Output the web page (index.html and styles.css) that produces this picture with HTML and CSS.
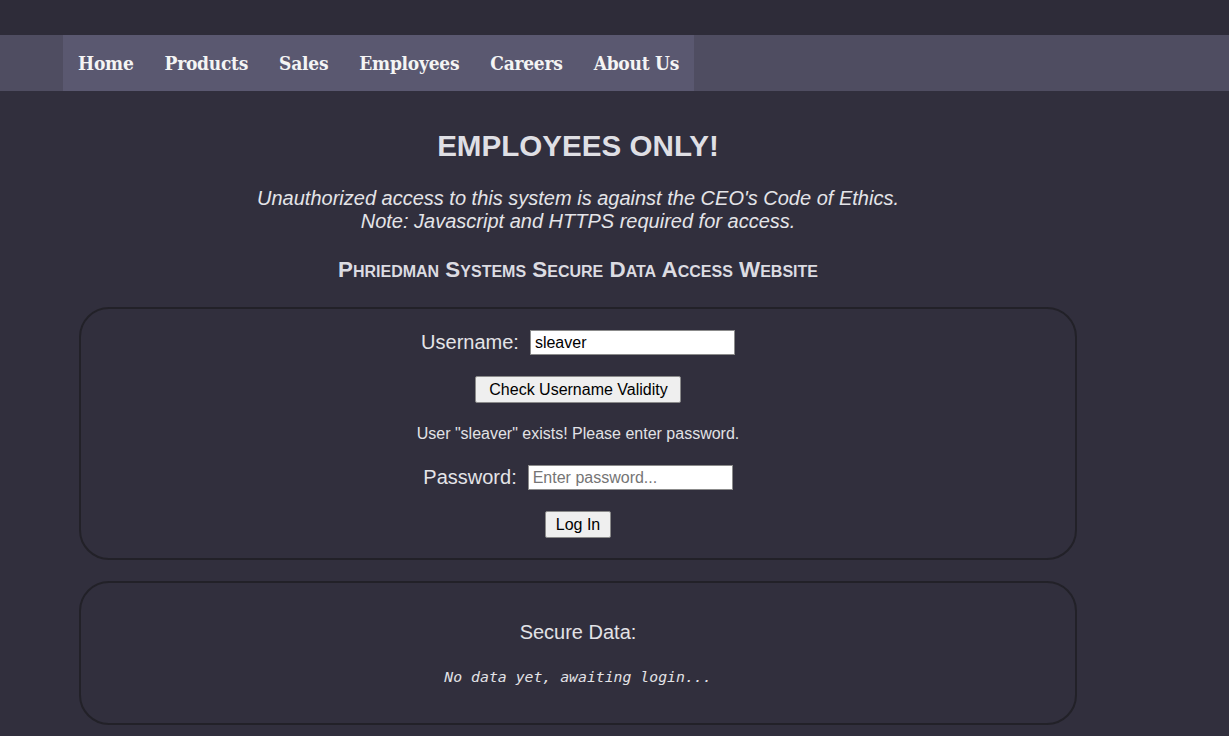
FILE: index.html
```html
<!DOCTYPE html>
<html>
<head>
<meta charset="utf-8">
<link rel="stylesheet" href="styles.css">
</head>
<body>
<div class="topstrip"></div>
<header class="navbar">
  <ul class="nav">
    <li><a href="#">Home</a></li>
    <li><a href="#">Products</a></li>
    <li><a href="#">Sales</a></li>
    <li><a href="#">Employees</a></li>
    <li><a href="#">Careers</a></li>
    <li><a href="#">About Us</a></li>
  </ul>
</header>
<main class="main">
  <h1 class="title">EMPLOYEES ONLY!</h1>
  <p class="warning">Unauthorized access to this system is against the CEO's Code of Ethics.<br>Note: Javascript and HTTPS required for access.</p>
  <h3 class="subtitle">Phriedman Systems Secure Data Access Website</h3>
  <section class="box login">
    <div class="row row-user">
      <label class="lbl">Username:</label>
      <input class="field" type="text" value="sleaver">
    </div>
    <div class="row row-check"><button class="btn btn-check">Check Username Validity</button></div>
    <div class="msg">User "sleaver" exists! Please enter password.</div>
    <div class="row row-pass">
      <label class="lbl">Password:</label>
      <input class="field" type="password" placeholder="Enter password...">
    </div>
    <div class="row row-login"><button class="btn btn-login">Log In</button></div>
  </section>
  <section class="box data">
    <div class="data-title">Secure Data:</div>
    <div class="data-body">No data yet, awaiting login...</div>
  </section>
</main>
</body>
</html>
```
FILE: styles.css
```css
html, body {
  margin: 0;
  padding: 0;
}
body {
  background: #312f3d;
  font-family: "Liberation Sans", Arial, sans-serif;
  color: #e2e2e6;
}
.topstrip {
  height: 35px;
  background: #2e2c39;
}
.navbar {
  height: 56px;
  background: #4f4d61;
}
.nav {
  list-style: none;
  margin: 0 0 0 63px;
  padding: 0 15px;
  display: inline-flex;
  height: 56px;
  align-items: center;
  background: #5a5870;
}
.nav li a {
  display: block;
  font-family: "DejaVu Serif Condensed", "DejaVu Serif", serif;
  font-weight: bold;
  font-size: 19px;
  color: #f4f4f4;
  text-decoration: none;
  margin-right: 31px;
  letter-spacing: -0.25px;
}
.nav li:last-child a { margin-right: 0; }
.main {
  margin-left: 63px;
  width: 1030px;
  text-align: center;
}
.title {
  font-size: 29.6px;
  font-weight: bold;
  margin: 0;
  padding-top: 38px;
  line-height: 34px;
  color: #dfdfe4;
}
.warning {
  font-style: italic;
  font-size: 20px;
  line-height: 23px;
  margin: 24px 0 0;
  color: #e4e4e8;
}
.subtitle {
  font-variant: small-caps;
  font-weight: bold;
  font-size: 22.4px;
  margin: 24px 0 0;
  line-height: 26px;
  color: #dcdce2;
}
.box {
  margin: 0 16px;
  border: 2px solid #222128;
  border-radius: 30px;
}
.login {
  margin-top: 24px;
  height: 253px;
  box-sizing: border-box;
  padding-top: 21px;
}
.row {
  display: flex;
  justify-content: center;
  align-items: center;
}
.lbl {
  font-size: 20px;
  margin-right: 11px;
  color: #e4e4e8;
}
.field {
  width: 205px;
  height: 25px;
  box-sizing: border-box;
  border: 1px solid #8b8b8b;
  font-family: "Liberation Sans", Arial, sans-serif;
  font-size: 16px;
  padding: 1px 4px;
  color: #000;
  background: #fff;
}
.field::placeholder { color: #757575; }
.btn {
  font-family: "Liberation Sans", Arial, sans-serif;
  font-size: 16px;
  padding: 3px 9px;
  border: 1px solid #8a8a8a;
  border-radius: 2px;
  background: #efefef;
  color: #000;
  height: 27px;
  line-height: 19px;
}
.btn-check { padding: 3px 10px 3px 11px; width: 206px; }
.row-check { margin-top: 21px; }
.msg {
  margin-top: 22px;
  font-size: 16px;
  line-height: 18px;
}
.row-pass { margin-top: 22px; }
.row-login { margin-top: 21px; }
.btn-login { width: 66px; }
.data {
  margin-top: 21px;
  height: 144px;
  box-sizing: border-box;
  padding-top: 37px;
}
.data-title {
  font-size: 20px;
  line-height: 24px;
}
.data-body {
  margin-top: 24px;
  font-family: "DejaVu Sans Mono", monospace;
  font-style: italic;
  font-size: 14.8px;
  line-height: 18px;
}
```
